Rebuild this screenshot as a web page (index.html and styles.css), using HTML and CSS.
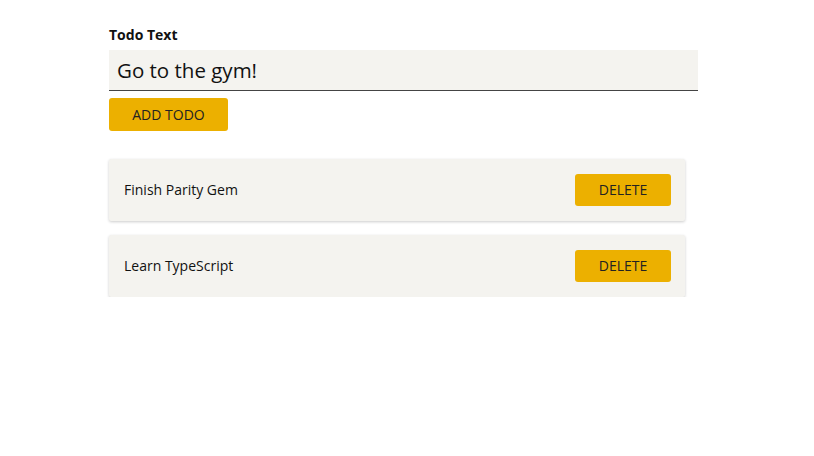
FILE: index.html
```html
<!DOCTYPE html>
<html>
<head>
<meta charset="utf-8">
<link rel="stylesheet" href="styles.css">
</head>
<body>
<main class="app">
  <form class="todo-form">
    <label class="label" for="todo">Todo Text</label>
    <input id="todo" class="text-input" type="text" value="Go to the gym!">
    <button type="button" class="btn btn-add">ADD TODO</button>
  </form>
  <ul class="todo-list">
    <li class="todo-card">
      <span class="todo-text">Finish Parity Gem</span>
      <button type="button" class="btn btn-delete">DELETE</button>
    </li>
    <li class="todo-card">
      <span class="todo-text">Learn TypeScript</span>
      <button type="button" class="btn btn-delete">DELETE</button>
    </li>
  </ul>
</main>
</body>
</html>
```
FILE: styles.css
```css
* { box-sizing: border-box; }
html, body { margin: 0; padding: 0; background: #fff; }
body {
  font-family: "Open Sans", "Noto Sans", sans-serif;
  color: #111;
}
.app {
  padding: 27px 0 0 109px;
  width: 814px;
}
.todo-form {
  display: flex;
  flex-direction: column;
  align-items: flex-start;
  width: 589px;
}
.label {
  font-size: 14px;
  font-weight: 700;
  line-height: 16px;
  margin-bottom: 7px;
}
.text-input {
  width: 589px;
  height: 41px;
  border: none;
  border-bottom: 1px solid #444;
  background: #f4f3ef;
  font-family: inherit;
  font-size: 20.5px;
  color: #111;
  padding: 0 8px 1px;
  outline: none;
  margin: 0;
}
.btn {
  border: none;
  background: #ecb000;
  color: #222;
  font-family: inherit;
  font-size: 14px;
  border-radius: 3px;
  cursor: pointer;
  padding: 0 0 1px;
}
.btn-add {
  margin-top: 7px;
  width: 119px;
  height: 33px;
}
.todo-list {
  list-style: none;
  margin: 28px 0 0;
  padding: 0;
  width: 576px;
  display: flex;
  flex-direction: column;
  gap: 14px;
}
.todo-card {
  height: 62px;
  background: #f4f3ef;
  box-shadow: 0 1px 3px rgba(0,0,0,0.2);
  border-radius: 2px;
  display: flex;
  align-items: center;
  justify-content: space-between;
  padding: 0 14px 1px 15px;
}
.todo-text {
  font-size: 14px;
  padding-bottom: 1px;
}
.btn-delete {
  width: 96px;
  height: 32px;
}
```
